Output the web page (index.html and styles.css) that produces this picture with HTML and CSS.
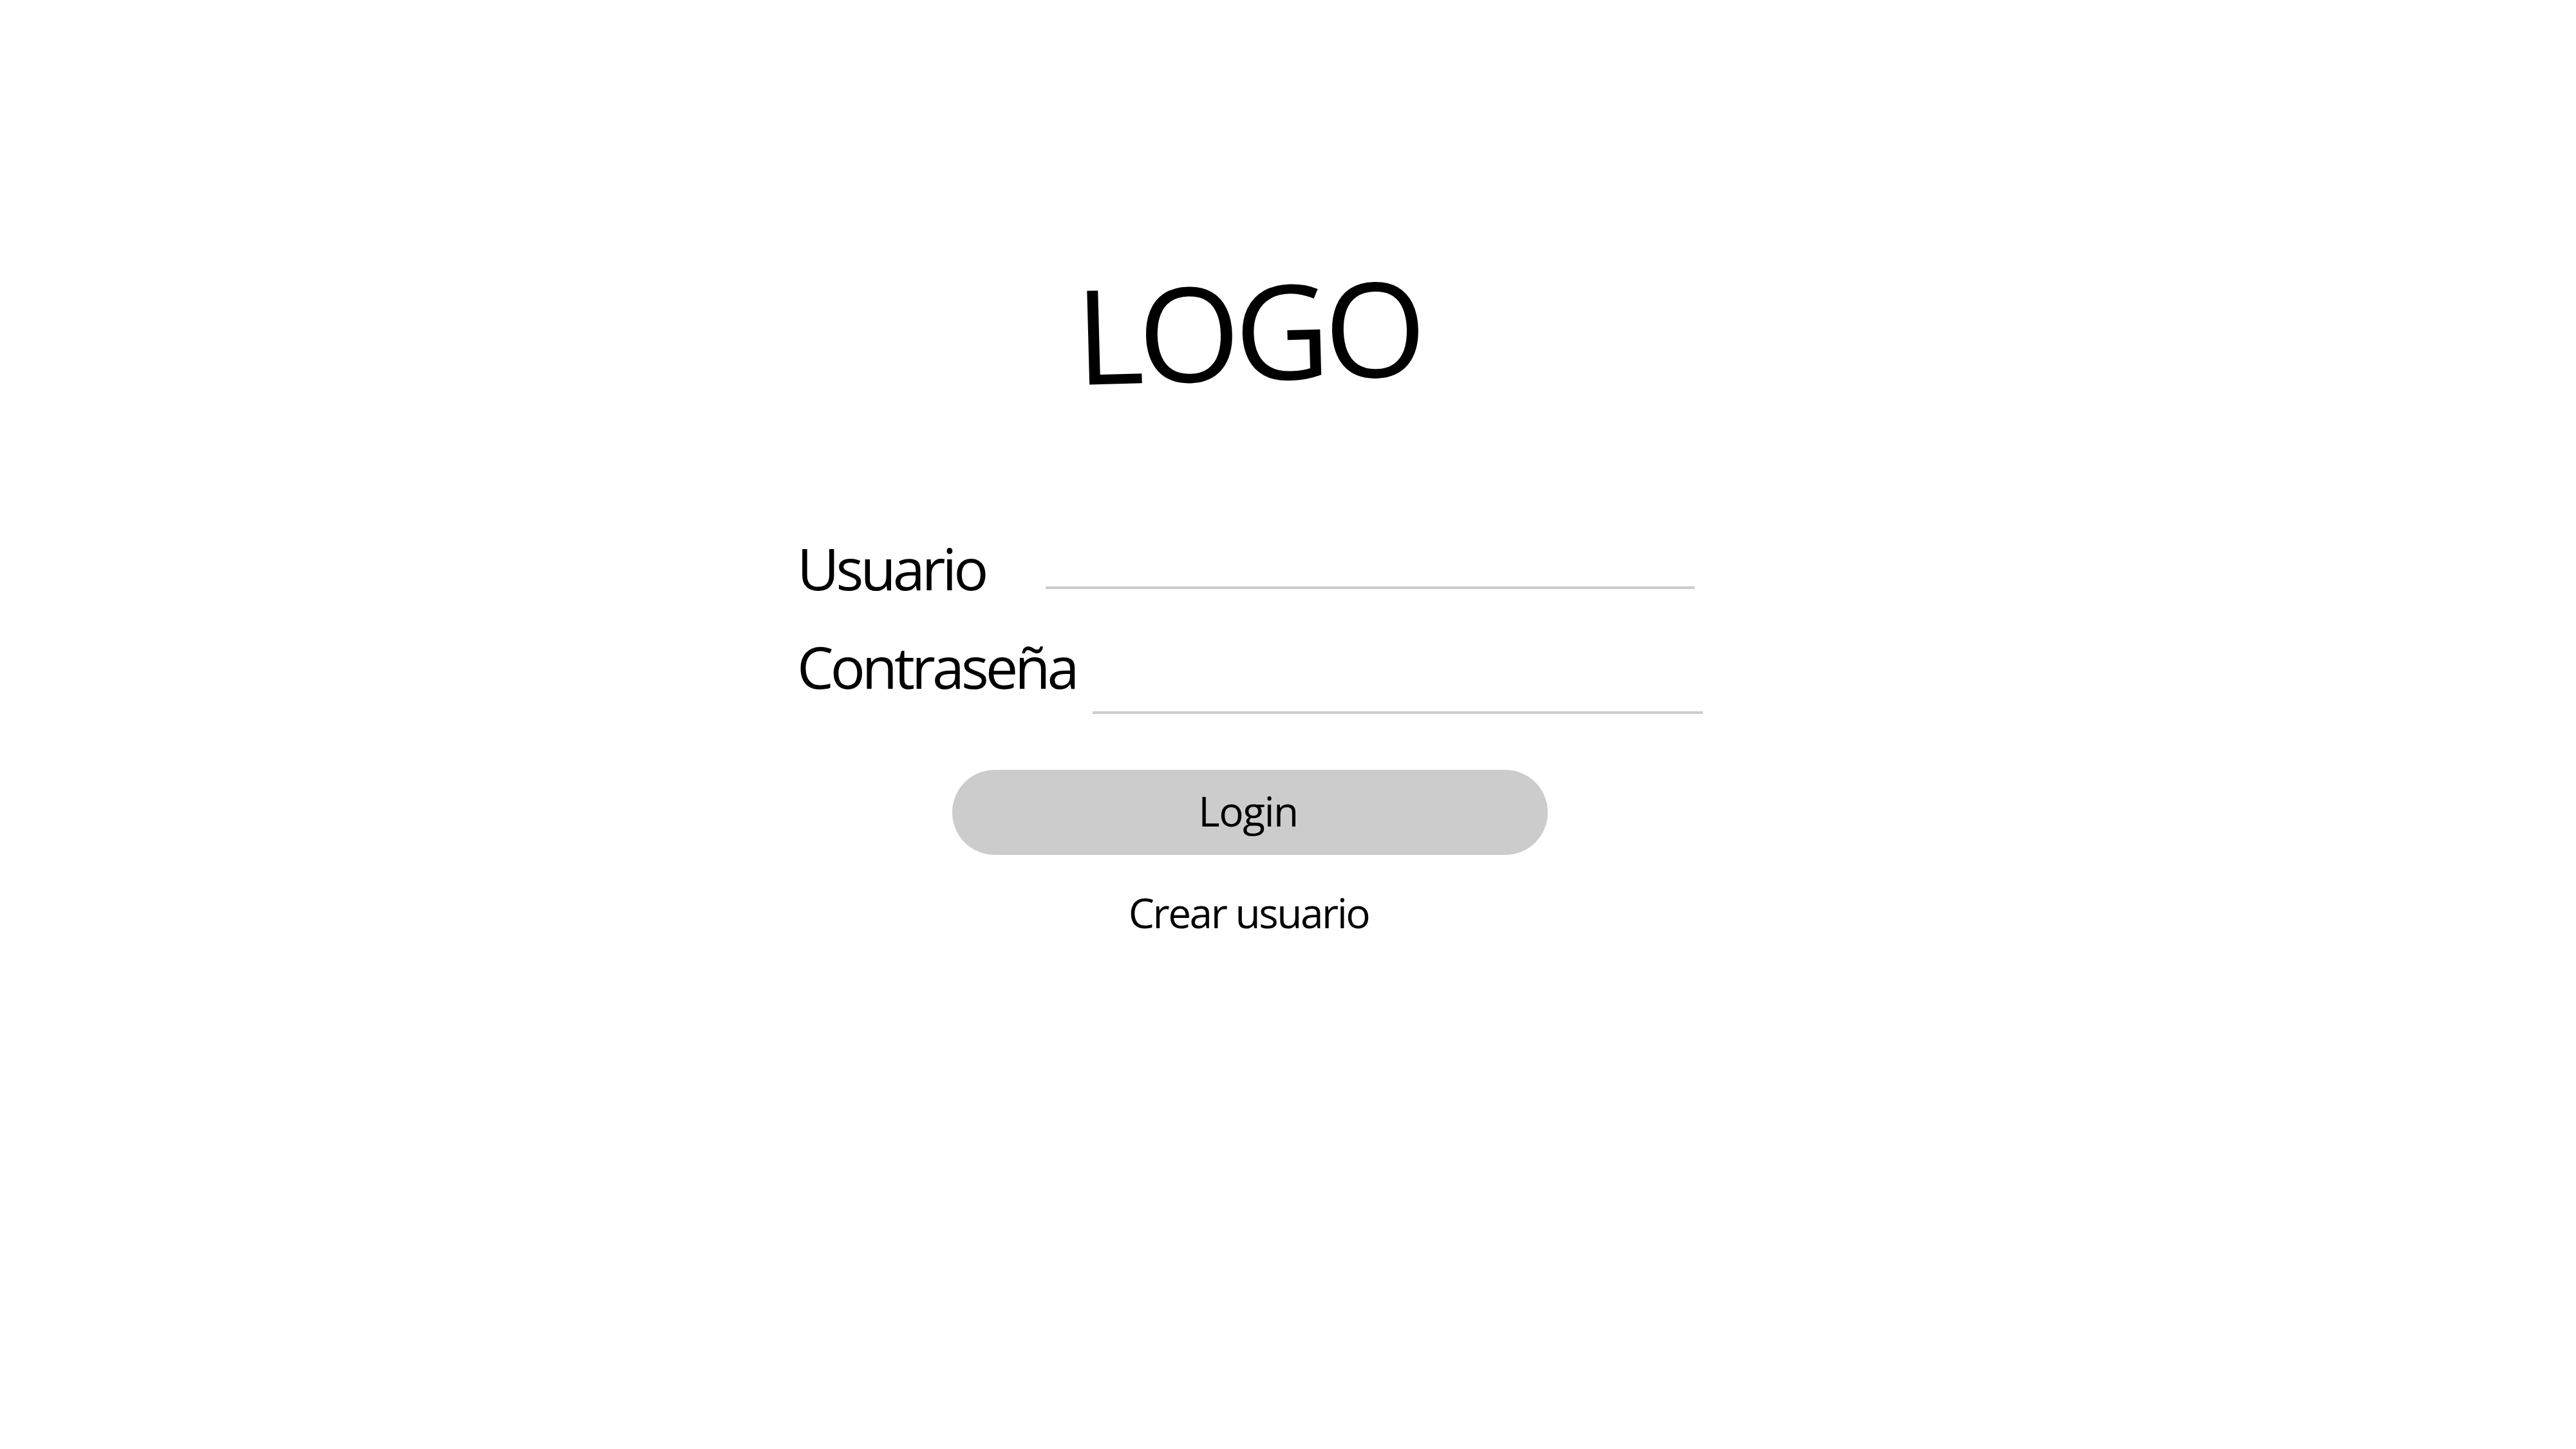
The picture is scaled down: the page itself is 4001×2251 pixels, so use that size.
FILE: index.html
```html
<!DOCTYPE html>
<html lang='es'>

<head>
    <meta charset='UTF-8'>
    <title>Login</title>
    <link rel="stylesheet" href="styles.css">
</head>

<body>
    <div class="page">
        <form class="login" method="post" onsubmit="return false">
            <div class="logo">LOGO</div>
            <div class="field field-user">
                <label for="user">Usuario</label>
                <input id="user" class="line" type="text" name="user">
            </div>
            <div class="field field-pass">
                <label for="pass">Contraseña</label>
                <input id="pass" class="line" type="password" name="pass">
            </div>
            <button class="button" type="submit">Login</button>
            <a class="link" href="#">Crear usuario</a>
        </form>
    </div>
</body>

</html>
```

FILE: styles.css
```css
* {
    padding: 0;
    margin: 0;
    box-sizing: border-box;
}

html {
    height: 100%;
}

body {
    height: 100%;
    background: #fff;
    color: #000;
    font-family: "Open Sans", "Noto Sans", sans-serif;
}

.page {
    display: flex;
    justify-content: center;
    padding-right: 118px;
}

.login {
    width: 1407px;
    display: flex;
    flex-direction: column;
    align-items: center;
}

.logo {
    margin-top: 410px;
    font-size: 204px;
    line-height: 1;
    letter-spacing: -9px;
    text-indent: -6px;
    transform: rotate(-1.5deg);
}

.field {
    align-self: stretch;
    display: flex;
    align-items: flex-start;
}

.field label {
    font-size: 90px;
    line-height: 1;
    letter-spacing: -5px;
}

.line {
    margin-left: auto;
    background: transparent;
    border: none;
    border-bottom: #ccc solid 4px;
    outline: none;
    font: inherit;
    font-size: 60px;
}

.field-user {
    margin-top: 223px;
}

.field-user .line {
    width: 1008px;
    height: 78px;
    margin-right: 13px;
}

.field-pass {
    margin-top: 63px;
}

.field-pass .line {
    width: 948px;
    height: 119px;
}

.button {
    margin-top: 87px;
    width: 925px;
    height: 132px;
    border: none;
    border-radius: 66px;
    background: #ccc;
    color: #000;
    font-family: inherit;
    font-size: 64px;
    letter-spacing: -1.5px;
    padding-bottom: 6px;
    padding-right: 6px;
    outline: none;
}

.link {
    margin-top: 58px;
    font-size: 64px;
    line-height: 1;
    letter-spacing: -2.5px;
    color: #000;
    text-decoration: none;
    margin-right: 4px;
}
```
